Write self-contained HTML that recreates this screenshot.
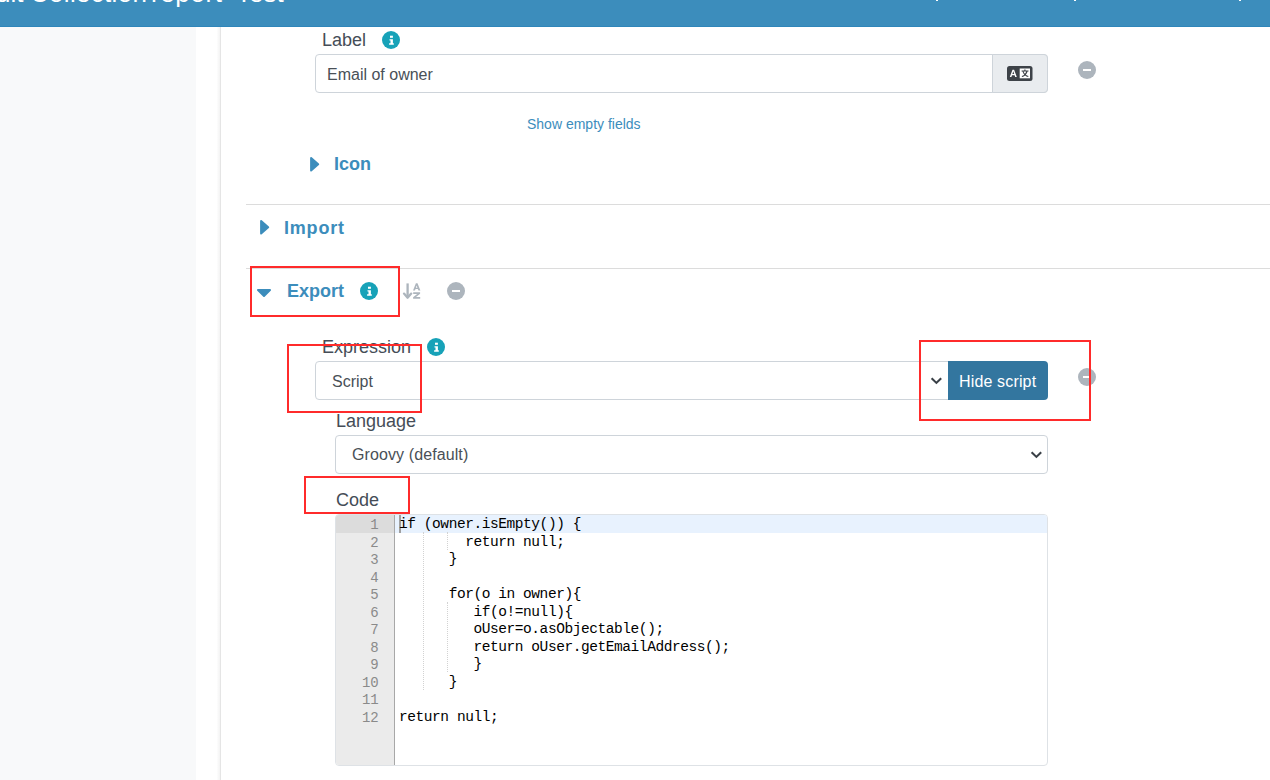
<!DOCTYPE html>
<html><head><meta charset="utf-8">
<style>
html,body{margin:0;padding:0;width:1270px;height:780px;overflow:hidden;background:#fff;font-family:"Liberation Sans",sans-serif;}
.a{position:absolute;}
.t{position:absolute;white-space:pre;line-height:1;}
#hdr{left:0;top:0;width:1270px;height:26px;background:#3c8dbc;border-bottom:1px solid #2f86ba;overflow:hidden;}
#side{left:0;top:27px;width:196px;height:753px;background:#f8f9fa;}
#vline{left:220px;top:27px;width:1px;height:753px;background:#e5e5e5;}
.lbl{font-size:18px;color:#454d57;}
.inp{border:1px solid #ced4da;border-radius:4px;background:#fff;box-sizing:border-box;}
.itxt{font-size:16px;color:#495057;}
.info{width:18px;height:18px;}
.minus{width:18px;height:18px;}
.hd{font-size:18px;font-weight:bold;color:#3c8dbc;}
.hr{height:1px;background:#dcdcdc;}
.red{border:2px solid #ff2b2b;box-sizing:border-box;}
.code{font-family:"Liberation Mono",monospace;font-size:14.5px;letter-spacing:-0.43px;color:#000;}
.ln{font-family:"Liberation Mono",monospace;font-size:14px;color:#8a8a8a;text-align:right;width:42.7px;}
</style></head><body>

<div id="hdr" class="a">
  <div class="t" style="left:-59px;top:-20px;font-size:26px;color:#fff;">Default</div>
  <div class="t" style="left:30px;top:-20px;font-size:26px;color:#fff;letter-spacing:0.3px;">Collection</div>
  <div class="t" style="left:151px;top:-20px;font-size:26px;color:#fff;letter-spacing:0.6px;">report-</div>
  <div class="t" style="left:236px;top:-20px;font-size:26px;color:#fff;">Test</div>
  <div class="a" style="left:936px;top:0;width:2px;height:1px;background:#fff;"></div>
  <div class="a" style="left:1074px;top:0;width:2px;height:1px;background:#fff;"></div>
  <div class="a" style="left:1239px;top:0;width:2px;height:1px;background:#fff;"></div>
</div>
<div id="side" class="a"></div>
<div class="a" style="left:217px;top:27px;width:3px;height:753px;background:linear-gradient(to right,#fdfdfd,#f3f3f3);"></div>
<div id="vline" class="a"></div>

<!-- Label row -->
<div class="t lbl" style="left:322px;top:31px;">Label</div>
<svg class="a info" style="left:382.3px;top:31px;" viewBox="0 0 18 18"><circle cx="9" cy="9" r="9" fill="#17a2b8"/><rect x="8" y="4.7" width="2.9" height="2.1" fill="#fff"/><path d="M7.5 8.2H10.9V12.2H11.8V13.8H7.1V12.2H8.5V9.6H7.5Z" fill="#fff"/></svg>

<div class="a inp" style="left:315px;top:54px;width:733px;height:39px;"></div>
<div class="t itxt" style="left:327px;top:67px;">Email of owner</div>
<div class="a" style="left:992px;top:54px;width:56px;height:39px;box-sizing:border-box;background:#e9ecef;border:1px solid #ced4da;border-radius:0 4px 4px 0;"></div>
<svg class="a" style="left:1007px;top:66px;" width="26" height="15" viewBox="0 0 26 15"><rect x="0" y="0" width="25.5" height="15" rx="2.5" fill="#3d4248"/><path d="M2.8 11h1.6l0.6-1.7h2.6l0.6 1.7h1.6l-2.7-7.3h-1.6zM5.4 8l0.9-2.7 0.9 2.7z" fill="#fff"/><rect x="12.7" y="2.5" width="10.3" height="9.8" fill="#fff"/><path d="M17.3 3.6h1.2v0.8h3v1.2h-0.9c-0.4 1.3-1 2.3-1.8 3.1 0.8 0.6 1.7 1 2.7 1.3l-0.4 1.1c-1.1-0.3-2.1-0.8-3-1.5-0.9 0.7-1.9 1.2-3 1.5l-0.4-1.1c1-0.3 1.9-0.7 2.6-1.3-0.8-0.8-1.4-1.8-1.8-3.1h-0.9v-1.2h2.7zM16.6 5.6c0.3 0.9 0.7 1.6 1.3 2.2 0.6-0.6 1-1.3 1.3-2.2z" fill="#3d4248"/></svg>
<svg class="a minus" style="left:1078px;top:61px;" viewBox="0 0 18 18"><circle cx="9" cy="9" r="9" fill="#adb5bd"/><rect x="5" y="8" width="8" height="2" fill="#fff"/></svg>

<div class="t" style="left:527px;top:117px;font-size:14px;color:#3c8dbc;">Show empty fields</div>

<!-- Icon -->
<svg class="a" style="left:310px;top:157px;" width="10" height="15" viewBox="0 0 10 15"><path d="M1.1 1.1 L8.2 7.3 L1.1 13.5z" fill="#3c8dbc" stroke="#3c8dbc" stroke-width="2" stroke-linejoin="round"/></svg>
<div class="t hd" style="left:334px;top:155px;">Icon</div>

<div class="a hr" style="left:246px;top:204px;width:1024px;"></div>

<!-- Import -->
<svg class="a" style="left:260px;top:220px;" width="10" height="15" viewBox="0 0 10 15"><path d="M1.1 1.1 L8.2 7.3 L1.1 13.5z" fill="#3c8dbc" stroke="#3c8dbc" stroke-width="2" stroke-linejoin="round"/></svg>
<div class="t hd" style="left:284px;top:219px;letter-spacing:0.8px;">Import</div>

<div class="a hr" style="left:246px;top:268px;width:1024px;"></div>

<!-- Export -->
<svg class="a" style="left:257px;top:289px;" width="15" height="9" viewBox="0 0 15 9"><path d="M1 1 H13 L7 7z" fill="#3c8dbc" stroke="#3c8dbc" stroke-width="2" stroke-linejoin="round"/></svg>
<div class="t hd" style="left:287px;top:282px;">Export</div>
<svg class="a info" style="left:359.5px;top:282px;" viewBox="0 0 18 18"><circle cx="9" cy="9" r="9" fill="#17a2b8"/><rect x="8" y="4.7" width="2.9" height="2.1" fill="#fff"/><path d="M7.5 8.2H10.9V12.2H11.8V13.8H7.1V12.2H8.5V9.6H7.5Z" fill="#fff"/></svg>
<svg class="a" style="left:402px;top:283px;" width="20" height="17" viewBox="0 0 20 17"><path d="M5.6 0.4v13" stroke="#adb5bd" stroke-width="2.3" fill="none"/><path d="M2 10.6l3.6 4.1 3.6-4.1" stroke="#adb5bd" stroke-width="2.3" fill="none" stroke-linecap="round" stroke-linejoin="round"/><path d="M11 7.5l2.9-7.2h1.6l2.9 7.2h-2l-0.5-1.4h-2.4l-0.5 1.4zM13.9 4.8h1.5l-0.75-2.2z" fill="#adb5bd"/><path d="M11.2 9.2h6.9v1.5l-4.1 3.3h4.2v1.7h-7.1v-1.5l4.1-3.3h-4z" fill="#adb5bd"/></svg>
<svg class="a minus" style="left:446.5px;top:282.3px;" viewBox="0 0 18 18"><circle cx="9" cy="9" r="9" fill="#adb5bd"/><rect x="5" y="8" width="8" height="2" fill="#fff"/></svg>

<!-- Expression -->
<div class="t lbl" style="left:322px;top:338px;">Expression</div>
<svg class="a info" style="left:426.5px;top:338px;" viewBox="0 0 18 18"><circle cx="9" cy="9" r="9" fill="#17a2b8"/><rect x="8" y="4.7" width="2.9" height="2.1" fill="#fff"/><path d="M7.5 8.2H10.9V12.2H11.8V13.8H7.1V12.2H8.5V9.6H7.5Z" fill="#fff"/></svg>
<div class="a inp" style="left:315px;top:361px;width:640px;height:39px;border-radius:4px 0 0 4px;"></div>
<div class="t itxt" style="left:332px;top:374px;">Script</div>
<svg class="a" style="left:930px;top:376px;" width="14" height="10" viewBox="0 0 14 10"><path d="M1.6 2.2l4.8 4.7 4.8-4.7" stroke="#3a4047" stroke-width="2.1" fill="none"/></svg>
<div class="a" style="left:948px;top:361px;width:100px;height:39px;background:#33769f;border-radius:0 4px 4px 0;"></div>
<div class="t" style="left:959px;top:374px;font-size:16px;color:#fff;letter-spacing:0.15px;">Hide script</div>
<svg class="a minus" style="left:1078px;top:368px;" viewBox="0 0 18 18"><circle cx="9" cy="9" r="9" fill="#adb5bd"/><rect x="5" y="8" width="8" height="2" fill="#fff"/></svg>

<!-- Language -->
<div class="t lbl" style="left:336px;top:412px;">Language</div>
<div class="a inp" style="left:335px;top:435px;width:713px;height:39px;"></div>
<div class="t itxt" style="left:352px;top:447px;letter-spacing:0.1px;">Groovy (default)</div>
<svg class="a" style="left:1029.5px;top:450px;" width="14" height="10" viewBox="0 0 14 10"><path d="M1.6 2.2l4.8 4.7 4.8-4.7" stroke="#3a4047" stroke-width="2.1" fill="none"/></svg>

<!-- Code -->
<div class="t lbl" style="left:336px;top:491px;">Code</div>
<div class="a" id="ed" style="left:335px;top:514px;width:713px;height:252px;box-sizing:border-box;border:1px solid #dee2e6;border-radius:4px;overflow:hidden;background:#fff;">
  <div class="a" style="left:0;top:0;width:58px;height:250px;background:#ebebeb;border-right:1px solid #a8a8a8;"></div>
  <div class="a" style="left:0;top:0;width:58px;height:18px;background:#dcdcdc;"></div>
  <div class="a" style="left:59px;top:0;width:660px;height:18px;background:#e8f2fe;"></div>
  <div class="a" style="left:63px;top:0;width:2px;height:18px;background:#a0a0a0;"></div>
  <div class="a" style="left:87px;top:17px;width:0;height:158px;border-left:1px dotted #d2d2d2;"></div>
  <div class="a" style="left:111px;top:17px;width:0;height:18px;border-left:1px dotted #d2d2d2;"></div>
  <div class="a" style="left:111px;top:87px;width:0;height:70px;border-left:1px dotted #d2d2d2;"></div>
  <div class="t ln" style="left:0;top:3.00px;">1</div>
  <div class="t code" style="left:63px;top:2.00px;">if (owner.isEmpty()) {</div>
  <div class="t ln" style="left:0;top:20.55px;">2</div>
  <div class="t code" style="left:63px;top:19.55px;">        return null;</div>
  <div class="t ln" style="left:0;top:38.09px;">3</div>
  <div class="t code" style="left:63px;top:37.09px;">      }</div>
  <div class="t ln" style="left:0;top:55.64px;">4</div>
  <div class="t ln" style="left:0;top:73.18px;">5</div>
  <div class="t code" style="left:63px;top:72.18px;">      for(o in owner){</div>
  <div class="t ln" style="left:0;top:90.73px;">6</div>
  <div class="t code" style="left:63px;top:89.73px;">         if(o!=null){</div>
  <div class="t ln" style="left:0;top:108.27px;">7</div>
  <div class="t code" style="left:63px;top:107.27px;">         oUser=o.asObjectable();</div>
  <div class="t ln" style="left:0;top:125.82px;">8</div>
  <div class="t code" style="left:63px;top:124.82px;">         return oUser.getEmailAddress();</div>
  <div class="t ln" style="left:0;top:143.36px;">9</div>
  <div class="t code" style="left:63px;top:142.36px;">         }</div>
  <div class="t ln" style="left:0;top:160.91px;">10</div>
  <div class="t code" style="left:63px;top:159.91px;">      }</div>
  <div class="t ln" style="left:0;top:178.45px;">11</div>
  <div class="t ln" style="left:0;top:196.00px;">12</div>
  <div class="t code" style="left:63px;top:195.00px;">return null;</div>
</div>

<!-- red boxes -->
<div class="a red" style="left:250px;top:266px;width:150px;height:51px;"></div>
<div class="a red" style="left:287px;top:344px;width:135px;height:69px;"></div>
<div class="a red" style="left:919px;top:340px;width:172px;height:81px;"></div>
<div class="a red" style="left:304px;top:476px;width:106px;height:38px;"></div>

</body></html>
